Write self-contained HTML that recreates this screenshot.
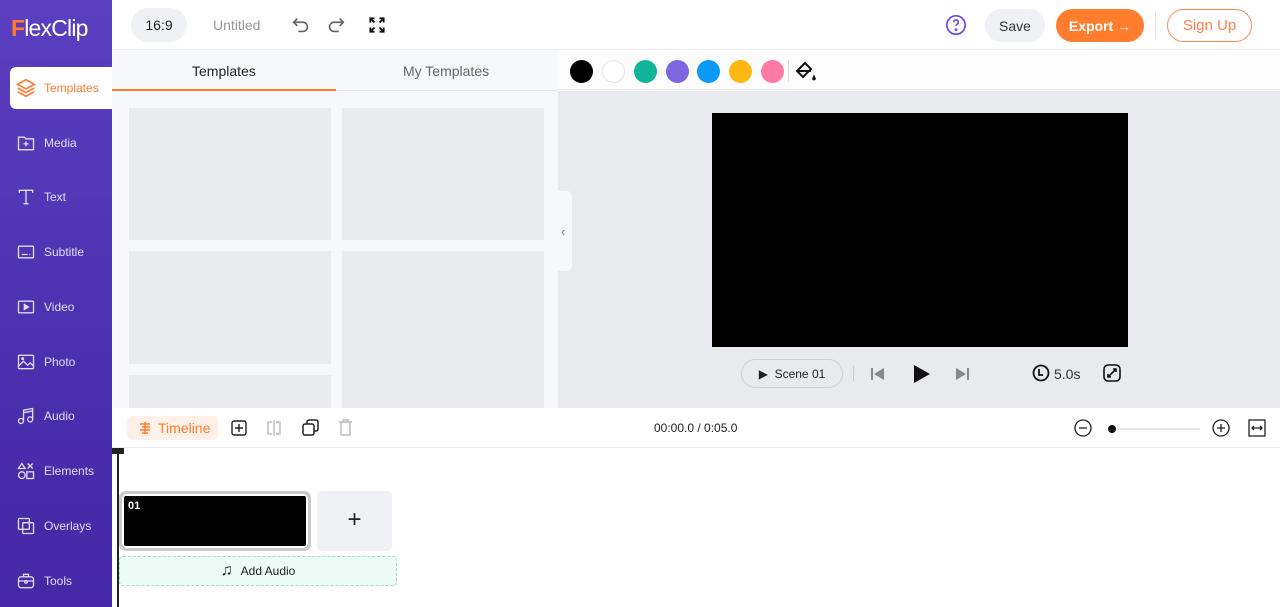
<!DOCTYPE html>
<html><head><meta charset="utf-8"><style>
*{box-sizing:border-box;margin:0;padding:0}
body{width:1280px;height:607px;overflow:hidden;font-family:"Liberation Sans",sans-serif;background:#fff;position:relative}
.abs{position:absolute}
.side{left:0;top:0;width:112px;height:607px;background:linear-gradient(#5a40c0,#4a2fae 60%,#4428a6)}
.logo{left:11px;top:15px;font-size:23px;color:#fff;letter-spacing:-0.8px}
.logo b{color:#ff7a2e;font-weight:bold}
.nav{left:0;width:112px;height:42px;color:#e0dcf5;font-size:12px;display:flex;align-items:center}
.nav svg{margin-left:16px;margin-right:8px}
.nav.act{left:10px;width:103px;background:#fff;border-radius:6px 0 0 6px;color:#ff7a2e}
.nav.act svg{margin-left:5px;margin-right:7px}
.top{left:112px;top:0;width:1168px;height:50px;background:#fff;border-bottom:1px solid #eceef2}
.pill{border-radius:18px;display:flex;align-items:center;justify-content:center;font-size:14px}
.panel{left:112px;top:50px;width:446px;height:358px;background:#f7f8fb}
.card{background:#eaebef}
.tl{left:112px;top:408px;width:1168px;height:40px;background:#fff;border-bottom:1px solid #eceef2}
.dot{width:23px;height:23px;border-radius:50%;top:60px}
</style></head><body>
<div class="abs side"></div>
<div class="abs logo"><b>F</b>lexClip</div>
<div class="abs nav act" style="top:67px"><svg width="22" height="22" viewBox="0 0 24 24" fill="none" stroke="#ff7a2e" stroke-width="1.8"><path d="M12 3l9 5-9 5-9-5z"/><path d="M3 12l9 5 9-5"/><path d="M3 16l9 5 9-5"/></svg>Templates</div>
<div class="abs nav" style="top:122px"><svg width="20" height="20" viewBox="0 0 24 24" fill="none" stroke="#e0dcf5" stroke-width="1.6"><path d="M3 5h7l2 2h9v13H3z"/><path d="M12 10v6M9 13h6"/></svg>Media</div>
<div class="abs nav" style="top:176px"><svg width="20" height="20" viewBox="0 0 24 24" fill="none" stroke="#e0dcf5" stroke-width="1.6"><path d="M4 7V4h16v3M12 4v16M9 20h6"/></svg>Text</div>
<div class="abs nav" style="top:231px"><svg width="20" height="20" viewBox="0 0 24 24" fill="none" stroke="#e0dcf5" stroke-width="1.6"><rect x="3" y="5" width="18" height="14" rx="1"/><path d="M7 15h7M16 15h1"/></svg>Subtitle</div>
<div class="abs nav" style="top:286px"><svg width="20" height="20" viewBox="0 0 24 24" fill="none" stroke="#e0dcf5" stroke-width="1.6"><rect x="3" y="5" width="18" height="14" rx="1"/><path d="M10 9l5 3-5 3z" fill="#e0dcf5"/></svg>Video</div>
<div class="abs nav" style="top:341px"><svg width="20" height="20" viewBox="0 0 24 24" fill="none" stroke="#e0dcf5" stroke-width="1.6"><rect x="3" y="4" width="18" height="16" rx="1"/><path d="M3 17l6-6 5 5 3-3 4 4"/><circle cx="8" cy="8" r="1"/></svg>Photo</div>
<div class="abs nav" style="top:395px"><svg width="20" height="20" viewBox="0 0 24 24" fill="none" stroke="#e0dcf5" stroke-width="1.6"><path d="M9 18V5l11-2v13"/><circle cx="6" cy="18" r="3"/><circle cx="17" cy="16" r="3"/><path d="M9 8l11-2"/></svg>Audio</div>
<div class="abs nav" style="top:450px"><svg width="20" height="20" viewBox="0 0 24 24" fill="none" stroke="#e0dcf5" stroke-width="1.6"><path d="M7 3l4 6H3z"/><path d="M14 3l6 6M20 3l-6 6"/><circle cx="7" cy="17" r="4"/><rect x="13" y="13" width="8" height="8"/></svg>Elements</div>
<div class="abs nav" style="top:505px"><svg width="20" height="20" viewBox="0 0 24 24" fill="none" stroke="#e0dcf5" stroke-width="1.6"><rect x="3" y="3" width="13" height="13" rx="1"/><rect x="8" y="8" width="13" height="13" rx="1"/></svg>Overlays</div>
<div class="abs nav" style="top:560px"><svg width="20" height="20" viewBox="0 0 24 24" fill="none" stroke="#e0dcf5" stroke-width="1.6"><rect x="3" y="7" width="18" height="13" rx="3"/><path d="M9 7V4h6v3M3 12h18"/><circle cx="12" cy="13" r="1.5"/></svg>Tools</div>

<div class="abs top"></div>
<div class="abs pill" style="left:131px;top:8px;width:56px;height:34px;background:#f0f1f4;color:#222">16:9</div>
<div class="abs" style="left:213px;top:17px;font-size:14px;color:#999">Untitled</div>
<svg class="abs" style="left:290px;top:14px" width="22" height="22" viewBox="0 0 24 24" fill="none" stroke="#666" stroke-width="1.8"><path d="M8 5L4 9l4 4"/><path d="M4 9h10a5 5 0 010 10H9"/></svg>
<svg class="abs" style="left:325px;top:14px" width="22" height="22" viewBox="0 0 24 24" fill="none" stroke="#666" stroke-width="1.8"><path d="M16 5l4 4-4 4"/><path d="M20 9H10a5 5 0 000 10h5"/></svg>
<svg class="abs" style="left:367px;top:15px" width="20" height="20" viewBox="0 0 24 24" fill="none" stroke="#111" stroke-width="2.2"><path d="M4 9V4h5M4 4l5 5M20 9V4h-5M20 4l-5 5M4 15v5h5M4 20l5-5M20 15v5h-5M20 20l-5-5"/></svg>
<svg class="abs" style="left:945px;top:14px" width="22" height="22" viewBox="0 0 24 24" fill="none" stroke="#6b45e6" stroke-width="1.8"><circle cx="12" cy="12" r="10"/><path d="M9.5 9a2.5 2.5 0 115 0c0 2-2.5 2-2.5 4"/><circle cx="12" cy="17" r=".6" fill="#6b45e6"/></svg>
<div class="abs pill" style="left:985px;top:9px;width:60px;height:33px;background:#f0f1f4;color:#333">Save</div>
<div class="abs pill" style="left:1056px;top:9px;width:88px;height:33px;background:#ff7d2c;color:#fff;font-weight:bold;font-size:14px">Export →</div>
<div class="abs" style="left:1155px;top:12px;width:1px;height:27px;background:#e5e5e5"></div>
<div class="abs pill" style="left:1167px;top:9px;width:85px;height:33px;border:1px solid #ff8a50;color:#ff7d4a;font-size:15px">Sign Up</div>

<div class="abs panel"></div>
<div class="abs" style="left:112px;top:50px;width:446px;height:41px;border-bottom:1px solid #e6e7ea"></div>
<div class="abs" style="left:112px;top:89px;width:224px;height:2px;background:#ff7d2c"></div>
<div class="abs" style="left:192px;top:63px;font-size:14px;color:#222">Templates</div>
<div class="abs" style="left:403px;top:63px;font-size:14px;color:#666">My Templates</div>
<div class="abs card" style="left:129px;top:108px;width:202px;height:132px"></div>
<div class="abs card" style="left:342px;top:108px;width:202px;height:132px"></div>
<div class="abs card" style="left:129px;top:251px;width:202px;height:113px"></div>
<div class="abs card" style="left:342px;top:251px;width:202px;height:157px"></div>
<div class="abs card" style="left:129px;top:375px;width:202px;height:33px"></div>

<div class="abs" style="left:558px;top:50px;width:722px;height:40px;background:#fcfcfd;border-bottom:1px solid #e6e7ea"></div>
<div class="abs dot" style="left:570px;background:#000"></div>
<div class="abs dot" style="left:602px;background:#fff;border:1px solid #e5e5e5"></div>
<div class="abs dot" style="left:634px;background:#0fb49a"></div>
<div class="abs dot" style="left:666px;background:#7d66e0"></div>
<div class="abs dot" style="left:697px;background:#0a9af5"></div>
<div class="abs dot" style="left:729px;background:#fdb913"></div>
<div class="abs dot" style="left:761px;background:#fe7aa4"></div>
<div class="abs" style="left:788px;top:60px;width:1px;height:22px;background:#ddd"></div>
<svg class="abs" style="left:795px;top:61px" width="22" height="22" viewBox="0 0 22 22" fill="none" stroke="#111" stroke-width="2"><path d="M10 2l-8 8 6 6 8-8z"/><path d="M2 10h14"/><path d="M19 14c0 2 1.3 2.5 1.3 3.6a1.3 1.3 0 01-2.6 0c0-1.1 1.3-1.6 1.3-3.6z" fill="#111" stroke-width="1"/></svg>
<div class="abs" style="left:558px;top:91px;width:722px;height:317px;background:#e9eaee"></div>
<div class="abs" style="left:558px;top:191px;width:14px;height:80px;background:#f7f8fb;border-radius:0 5px 5px 0"></div>
<div class="abs" style="left:561px;top:224px;font-size:13px;color:#777">‹</div>
<div class="abs" style="left:712px;top:113px;width:416px;height:234px;background:#000"></div>
<div class="abs pill" style="left:741px;top:359px;width:102px;height:29px;border:1px solid #d0d1d5;font-size:12px;color:#222">▶&nbsp; Scene 01</div>
<div class="abs" style="left:853px;top:366px;width:1px;height:15px;background:#ccc"></div>
<svg class="abs" style="left:870px;top:367px" width="15" height="14" viewBox="0 0 15 14"><rect x="1" y="1" width="2" height="12" fill="#888"/><path d="M14 1v12L4 7z" fill="#888"/></svg>
<svg class="abs" style="left:913px;top:364px" width="18" height="20" viewBox="0 0 18 20"><path d="M1 1l16 9-16 9z" fill="#111"/></svg>
<svg class="abs" style="left:955px;top:367px" width="15" height="14" viewBox="0 0 15 14"><path d="M1 1v12l10-6z" fill="#888"/><rect x="12" y="1" width="2" height="12" fill="#888"/></svg>
<svg class="abs" style="left:1032px;top:364px" width="18" height="18" viewBox="0 0 18 18" fill="none" stroke="#111" stroke-width="1.8"><circle cx="9" cy="9" r="7.5"/><path d="M7 5v6h4"/></svg>
<div class="abs" style="left:1054px;top:366px;font-size:14px;color:#333">5.0s</div>
<svg class="abs" style="left:1103px;top:364px" width="18" height="18" viewBox="0 0 18 18" fill="none" stroke="#111" stroke-width="1.6"><rect x="1" y="1" width="16" height="16" rx="4"/><path d="M10 5h3v3M13 5l-4 4M8 13H5v-3M5 13l4-4"/></svg>

<div class="abs tl"></div>
<div class="abs pill" style="left:127px;top:416px;width:91px;height:24px;border-radius:5px;background:#fff0e8;color:#ff7d2c;font-size:14px;justify-content:flex-start;padding-left:11px"><svg width="14" height="14" viewBox="0 0 14 14" fill="none" stroke="#ff7d2c" stroke-width="1.5" style="margin-right:6px"><path d="M7 1v12M2 3h10M4 6h8M2 9h10M4 12h6"/></svg>Timeline</div>
<svg class="abs" style="left:231px;top:420px" width="16" height="16" viewBox="0 0 16 16" fill="none" stroke="#222" stroke-width="1.4"><rect x="1" y="1" width="14" height="14" rx="2"/><path d="M8 4v8M4 8h8"/></svg>
<svg class="abs" style="left:266px;top:420px" width="16" height="16" viewBox="0 0 16 16" fill="none" stroke="#bbb" stroke-width="1.4"><path d="M6 2H2v12h4M10 2h4v12h-4M8 0v16"/></svg>
<svg class="abs" style="left:302px;top:419px" width="17" height="17" viewBox="0 0 17 17" fill="none" stroke="#222" stroke-width="1.5"><rect x="1" y="5" width="11" height="11" rx="2"/><path d="M5 5V3a2 2 0 012-2h7a2 2 0 012 2v7a2 2 0 01-2 2h-2"/></svg>
<svg class="abs" style="left:338px;top:419px" width="15" height="17" viewBox="0 0 15 17" fill="none" stroke="#bbb" stroke-width="1.4"><path d="M1 3h13M5 3V1h5v2M3 3v13h9V3"/></svg>
<div class="abs" style="left:654px;top:421px;font-size:12px;color:#222">00:00.0 / 0:05.0</div>
<svg class="abs" style="left:1074px;top:419px" width="18" height="18" viewBox="0 0 18 18" fill="none" stroke="#222" stroke-width="1.3"><circle cx="9" cy="9" r="8"/><path d="M5 9h8"/></svg>
<div class="abs" style="left:1110px;top:428px;width:90px;height:2px;background:#e3e4e8"></div>
<div class="abs" style="left:1108px;top:425px;width:8px;height:8px;border-radius:50%;background:#111"></div>
<svg class="abs" style="left:1212px;top:419px" width="18" height="18" viewBox="0 0 18 18" fill="none" stroke="#222" stroke-width="1.3"><circle cx="9" cy="9" r="8"/><path d="M5 9h8M9 5v8"/></svg>
<svg class="abs" style="left:1248px;top:419px" width="18" height="18" viewBox="0 0 18 18" fill="none" stroke="#222" stroke-width="1.3"><rect x="1" y="1" width="16" height="16"/><path d="M4 9h10M6 7L4 9l2 2M12 7l2 2-2 2"/></svg>

<div class="abs" style="left:117px;top:452px;width:1.5px;height:155px;background:#222"></div>
<div class="abs" style="left:112px;top:448px;width:12px;height:6px;background:#222"></div>
<div class="abs" style="left:119px;top:491px;width:192px;height:60px;border:3px solid #c8cacd;border-radius:7px;background:#000;box-shadow:inset 0 0 0 2px #fff"></div>
<div class="abs" style="left:128px;top:500px;font-size:11px;font-weight:bold;color:#fff">01</div>
<div class="abs" style="left:317px;top:491px;width:75px;height:60px;background:#f0f1f4;border-radius:5px;text-align:center;font-size:24px;line-height:58px;color:#222">+</div>
<div class="abs" style="left:119px;top:556px;width:278px;height:30px;border:1px dashed #8ee6c7;border-radius:4px;background:#edfcf6;display:flex;align-items:center;justify-content:center;font-size:12px;color:#222"><span style="font-size:16px;margin-right:8px">♫</span>Add Audio</div>
</body></html>
